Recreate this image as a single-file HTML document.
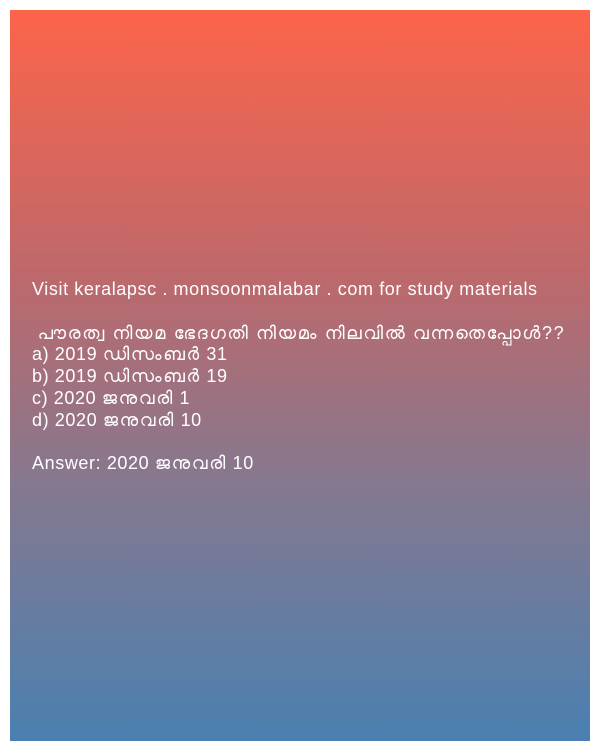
<!DOCTYPE html>
<html><head><meta charset="utf-8"><style>
html,body{margin:0;padding:0;background:#fff;width:600px;height:750px;overflow:hidden}
.box{position:absolute;left:10px;top:10px;width:580px;height:731px;background:linear-gradient(to bottom,#fd644a 0%,#c0686a 35%,#85788f 65%,#4a80b1 100%)}
.t{position:absolute;left:32px;top:279px;color:#fff;font-family:"Liberation Sans","DejaVu Sans",sans-serif;font-size:18px;letter-spacing:0.6px;line-height:21.8px;white-space:pre}
.m{letter-spacing:1.65px}
</style></head><body>
<div class="box"></div>
<div class="t">Visit keralapsc . monsoonmalabar . com for study materials

 <span class="m">പൗരത്വ നിയമ ഭേദഗതി നിയമം നിലവിൽ വന്നതെപ്പോൾ??</span>
a) 2019 <span class="m">ഡിസംബർ</span> 31
b) 2019 <span class="m">ഡിസംബർ</span> 19
c) 2020 <span class="m">ജനുവരി</span> 1
d) 2020 <span class="m">ജനുവരി</span> 10

Answer: 2020 <span class="m">ജനുവരി</span> 10</div>
</body></html>
